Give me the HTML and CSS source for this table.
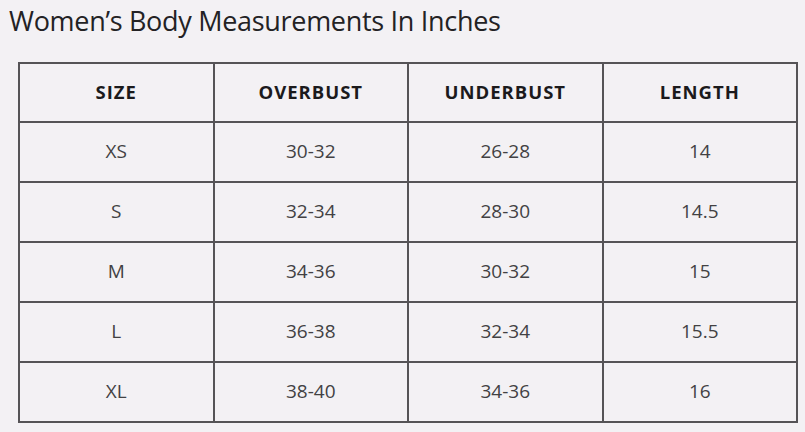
FILE: index.html
```html
<!DOCTYPE html>
<html>
<head>
<meta charset="utf-8">
<link rel="stylesheet" href="styles.css">
</head>
<body>
<div class="page">
  <h1 class="title">Women’s Body Measurements In Inches</h1>
  <table class="chart">
    <thead>
      <tr><th>SIZE</th><th>OVERBUST</th><th>UNDERBUST</th><th>LENGTH</th></tr>
    </thead>
    <tbody>
      <tr><td>XS</td><td>30-32</td><td>26-28</td><td>14</td></tr>
      <tr><td>S</td><td>32-34</td><td>28-30</td><td>14.5</td></tr>
      <tr><td>M</td><td>34-36</td><td>30-32</td><td>15</td></tr>
      <tr><td>L</td><td>36-38</td><td>32-34</td><td>15.5</td></tr>
      <tr><td>XL</td><td>38-40</td><td>34-36</td><td>16</td></tr>
    </tbody>
  </table>
</div>
</body>
</html>
```

FILE: styles.css
```css
html, body {
  margin: 0;
  padding: 0;
  background: #f3f1f4;
}
.page {
  padding: 2px 8px 0 9px;
  font-family: "Open Sans", "Liberation Sans", sans-serif;
  color: #2b2a2c;
}
.title {
  margin: 0;
  font-size: 27px;
  font-weight: 400;
  letter-spacing: -0.3px;
  line-height: 38px;
  height: 60px;
  color: #232224;
}
.chart {
  margin-left: 9px;
  width: 780px;
  border-collapse: collapse;
  table-layout: fixed;
  border: 2px solid #555356;
}
.chart th, .chart td {
  border: 2px solid #555356;
  text-align: center;
  padding: 0 0 3px 0;
}
.chart th {
  height: 54px;
  font-size: 18.5px;
  font-weight: 700;
  letter-spacing: 1px;
  color: #1b1a1c;
}
.chart td {
  height: 55px;
  font-size: 19px;
  color: #424143;
}
```
